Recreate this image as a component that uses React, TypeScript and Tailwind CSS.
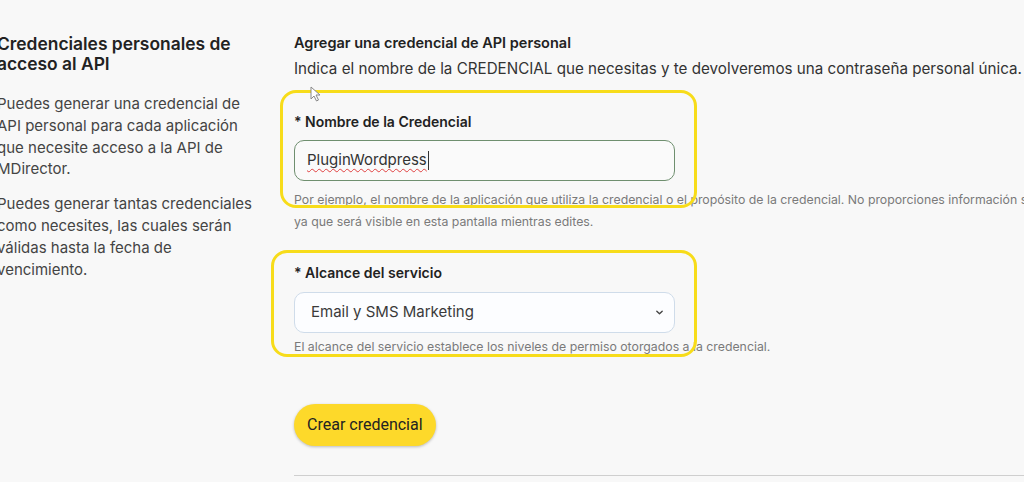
import React from "react";

export default function App() {
  const font = { fontFamily: "Inter, 'Noto Sans', sans-serif" };
  return (
    <div className="relative w-[1024px] h-[482px] overflow-hidden bg-[#f8f8f8] text-[#2b2b2b]" style={font}>
      <div className="flex">
        {/* Left column */}
        <div className="w-[264px] ml-[-3px] shrink-0 pt-[34px]">
          <h2 className="text-[17.4px] leading-[20px] font-semibold text-[#222] whitespace-nowrap">
            Credenciales personales de
            <br />
            acceso al API
          </h2>
          <p className="mt-[19px] text-[15px] leading-[21.8px] text-[#444] whitespace-nowrap">
            Puedes generar una credencial de
            <br />
            API personal para cada aplicación
            <br />
            que necesite acceso a la API de
            <br />
            MDirector.
          </p>
          <p className="mt-[13px] text-[15px] leading-[21.8px] text-[#444] whitespace-nowrap">
            Puedes generar tantas credenciales
            <br />
            como necesites, las cuales serán
            <br />
            válidas hasta la fecha de
            <br />
            vencimiento.
          </p>
        </div>

        {/* Right column */}
        <div className="ml-[33px] flex-1 pt-[33px] min-w-0">
          <h3 className="text-[14.5px] leading-[20px] font-semibold text-[#222] whitespace-nowrap">
            Agregar una credencial de API personal
          </h3>
          <p className="mt-[5px] text-[15.2px] leading-[22px] text-[#333] whitespace-nowrap">
            Indica el nombre de la CREDENCIAL que necesitas y te devolveremos una contraseña personal única.
          </p>

          <label className="block mt-[32px] text-[14px] leading-[20px] font-semibold text-[#222]">
            * Nombre de la Credencial
          </label>
          <div className="mt-[8px] w-[381px] h-[41px] rounded-[10px] border border-[#6f8f6f] bg-[#fafafa] flex items-center px-[12px]">
            <span className="text-[15px] text-[#333] underline decoration-wavy decoration-[#e04040] decoration-1 underline-offset-[3px]">
              PluginWordpress
            </span>
            <span className="ml-[1px] w-[1px] h-[19px] bg-[#333]" />
          </div>
          <div className="mt-[8px] text-[12.3px] leading-[22px] text-[#7a7a7a] whitespace-nowrap">
            Por ejemplo, el nombre de la aplicación que utiliza la credencial o el propósito de la credencial. No proporciones información sensible,
            <br />
            ya que será visible en esta pantalla mientras edites.
          </div>

          <label className="block mt-[30px] text-[14px] leading-[20px] font-semibold text-[#222]">
            * Alcance del servicio
          </label>
          <div className="mt-[9px] w-[381px] h-[41px] rounded-[10px] border border-[#cfdcea] bg-[#fcfdff] flex items-center justify-between pl-[16px] pr-[10px]">
            <span className="text-[15px] text-[#3a3a3a]">Email y SMS Marketing</span>
            <svg width="9" height="9" viewBox="0 0 10 10" fill="none">
              <path d="M2 3.5 L5 6.5 L8 3.5" stroke="#444" strokeWidth="1.5" strokeLinecap="round" strokeLinejoin="round" />
            </svg>
          </div>
          <div className="mt-[3px] text-[12.3px] leading-[22px] text-[#7a7a7a] whitespace-nowrap">
            El alcance del servicio establece los niveles de permiso otorgados a la credencial.
          </div>

          <div className="mt-[46px]">
            <button
              className="block h-[42px] px-[13px] rounded-full bg-[#fdd92a] text-[16px] leading-[42px] text-[#222] shadow-[0_1px_3px_rgba(0,0,0,0.25)]"
              style={{ fontFamily: "Roboto, sans-serif" }}
            >
              Crear credencial
            </button>
          </div>

          <div className="mt-[29px] h-[1px] bg-[#cfcfcf]" />
        </div>
      </div>

      {/* Annotation highlights */}
      <div className="absolute left-[280px] top-[90px] w-[417px] h-[118px] rounded-[16px] border-[3px] border-[#f7dc1a] pointer-events-none" />
      <div className="absolute left-[271px] top-[250px] w-[426px] h-[107px] rounded-[16px] border-[3px] border-[#f7dc1a] pointer-events-none" />

      {/* Mouse cursor */}
      <svg className="absolute left-[310px] top-[86px]" width="12" height="16" viewBox="0 0 12 16">
        <path d="M1 1 L1 13 L4 10 L6.5 15 L8.5 14 L6 9 L10 9 Z" fill="#fff" stroke="#888" strokeWidth="1" strokeLinejoin="round" />
      </svg>
    </div>
  );
}
